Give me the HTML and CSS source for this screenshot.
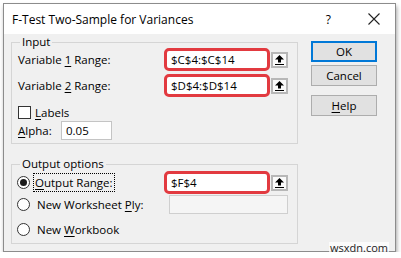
FILE: index.html
```html
<!DOCTYPE html>
<html>
<head>
    <title>F-Test Two-Sample for Variances</title>
    <link rel="stylesheet" href="styles.css">
</head>
<body>
    <div class="window">
        <div class="titlebar">
            <span class="title">F-Test Two-Sample for Variances</span>
            <span class="help-q">?</span>
            <svg class="close" width="12" height="12" viewBox="0 0 12 12">
                <path d="M0.5 0.5 L11.5 11.5 M11.5 0.5 L0.5 11.5" stroke="#222" stroke-width="1.1" fill="none"/>
            </svg>
        </div>
        <div class="dialog">
            <div class="groups">
                <fieldset class="group group-input">
                    <legend>Input</legend>
                    <div class="row row-range">
                        <span class="label">Variable <u>1</u> Range:</span>
                        <div class="range-box">$C$4:$C$14</div>
                        <span class="ref-btn">
                            <svg width="9" height="10" viewBox="0 0 9 10"><path d="M4.5 0 L9 4.5 L6 4.5 L6 7.5 L3 7.5 L3 4.5 L0 4.5 Z M0 9 H9 V10 H0 Z" fill="#000"/></svg>
                        </span>
                    </div>
                    <div class="row row-range">
                        <span class="label">Variable <u>2</u> Range:</span>
                        <div class="range-box">$D$4:$D$14</div>
                        <span class="ref-btn">
                            <svg width="9" height="10" viewBox="0 0 9 10"><path d="M4.5 0 L9 4.5 L6 4.5 L6 7.5 L3 7.5 L3 4.5 L0 4.5 Z M0 9 H9 V10 H0 Z" fill="#000"/></svg>
                        </span>
                    </div>
                    <div class="row row-check">
                        <span class="checkbox"></span>
                        <span><u>L</u>abels</span>
                    </div>
                    <div class="row row-alpha">
                        <span class="alpha-label"><u>A</u>lpha:</span>
                        <div class="text-box">0.05</div>
                    </div>
                </fieldset>
                <fieldset class="group group-output">
                    <legend>Output options</legend>
                    <div class="row row-out">
                        <span class="radio checked"></span>
                        <span class="option focus"><u>O</u>utput Range:</span>
                        <span class="spacer"></span>
                        <div class="range-box">$F$4</div>
                        <span class="ref-btn">
                            <svg width="9" height="10" viewBox="0 0 9 10"><path d="M4.5 0 L9 4.5 L6 4.5 L6 7.5 L3 7.5 L3 4.5 L0 4.5 Z M0 9 H9 V10 H0 Z" fill="#000"/></svg>
                        </span>
                    </div>
                    <div class="row row-ply">
                        <span class="radio"></span>
                        <span class="option">New Worksheet <u>P</u>ly:</span>
                        <span class="spacer"></span>
                        <div class="disabled-box"></div>
                    </div>
                    <div class="row row-book">
                        <span class="radio"></span>
                        <span class="option">New <u>W</u>orkbook</span>
                    </div>
                </fieldset>
            </div>
            <div class="buttons">
                <button class="default">OK</button>
                <button>Cancel</button>
                <button class="help-btn"><u>H</u>elp</button>
            </div>
        </div>
        <div class="watermark">wsxdn.com</div>
    </div>
</body>
</html>
```

FILE: styles.css
```css
body {
    margin: 0;
    background-color: #ffffff;
    font-family: "Open Sans", "Noto Sans", sans-serif;
    font-size: 11.5px;
    color: #000;
}
.window {
    position: relative;
    margin: 3px 0 0 3px;
    width: 391px;
    height: 247px;
    border: 1px solid #8c8c8c;
    background-color: #f0f0f0;
    box-shadow: 1px 3px 4px rgba(0, 0, 0, 0.35);
}
.titlebar {
    height: 30px;
    background-color: #ffffff;
    display: flex;
    align-items: center;
    padding-left: 8px;
}
.title {
    flex: 1;
    font-size: 12px;
}
.help-q {
    font-size: 12px;
    margin-right: 37px;
}
.close {
    margin-right: 15px;
}
.dialog {
    display: flex;
    padding: 2px 18px 0 7px;
}
.groups {
    width: 287px;
}
.group {
    margin: 0;
    border: 1px solid #d5d5d5;
    padding: 0 9px 3px 6px;
}
.group legend {
    line-height: 12px;
    padding: 0 2px;
    margin-left: 2px;
}
.group-output {
    margin-top: 14px;
    padding-bottom: 4px;
}
.row {
    display: flex;
    align-items: center;
}
.row-range {
    height: 23px;
}
.row-range + .row-range {
    margin-top: 3px;
}
.label,
.spacer {
    flex: 1;
}
u {
    text-decoration-thickness: 1px;
    text-underline-offset: 2px;
}
.range-box {
    box-sizing: border-box;
    width: 106px;
    height: 23px;
    border: 3px solid #e23a40;
    border-radius: 5px;
    background-color: #ffffff;
    padding-left: 4px;
    line-height: 17px;
}
.ref-btn {
    box-sizing: border-box;
    width: 17px;
    height: 16px;
    margin-left: 1px;
    border: 2px solid #b7b7b7;
    background-color: #fafafa;
    display: flex;
    align-items: center;
    justify-content: center;
}
.row-check {
    height: 18px;
    margin-top: 6px;
}
.checkbox {
    width: 11px;
    height: 11px;
    border: 1px solid #333;
    background-color: #fff;
    margin-right: 4px;
}
.row-alpha {
    height: 19px;
}
.alpha-label {
    width: 43px;
}
.text-box {
    box-sizing: border-box;
    width: 51px;
    height: 19px;
    border: 1px solid #c4c4c4;
    background-color: #fff;
    padding-left: 4px;
    line-height: 17px;
}
.row-out {
    height: 23px;
    margin-top: 1px;
}
.row-ply {
    height: 19px;
    margin-top: 1px;
}
.row-book {
    height: 19px;
    margin-top: 6px;
}
.radio {
    box-sizing: border-box;
    width: 13px;
    height: 13px;
    border: 1px solid #333;
    border-radius: 50%;
    background-color: #fff;
    margin: 0 5px 0 -1px;
    display: flex;
    align-items: center;
    justify-content: center;
}
.radio.checked::after {
    content: "";
    width: 7px;
    height: 7px;
    border-radius: 50%;
    background-color: #1a1a1a;
}
.option {
    padding: 1px 1px;
    border: 1px dotted transparent;
}
.option.focus {
    border-color: #000;
    margin-left: -2px;
}
.disabled-box {
    box-sizing: border-box;
    width: 119px;
    height: 19px;
    border: 1px solid #cfcfcf;
    background-color: #f5f5f5;
}
.buttons {
    margin-left: 13px;
    padding-top: 5px;
    display: flex;
    flex-direction: column;
}
button {
    box-sizing: border-box;
    width: 66px;
    height: 21px;
    border: 1px solid #adadad;
    background-color: #e1e1e1;
    font-family: inherit;
    font-size: 11.5px;
    padding: 0;
    margin-bottom: 3px;
    color: #000;
}
button.default {
    border: 2px solid #0078d7;
}
button.help-btn {
    margin-top: 6px;
}
.watermark {
    position: absolute;
    right: 6px;
    bottom: -2px;
    padding: 0 1px;
    background-color: rgba(255, 255, 255, 0.7);
    font-size: 11px;
    line-height: 11px;
    color: #222;
}
```
